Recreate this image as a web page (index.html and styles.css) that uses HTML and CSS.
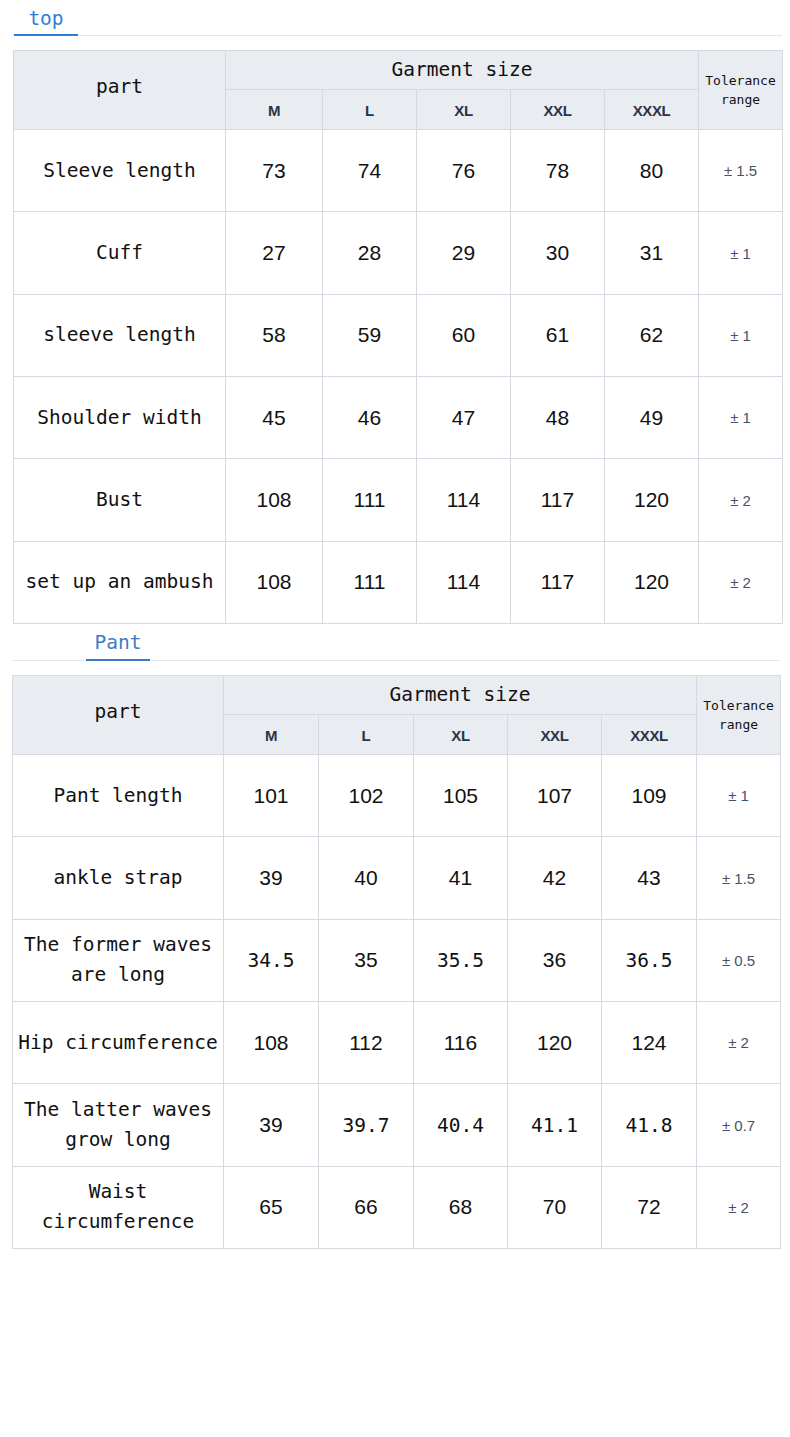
FILE: index.html
```html
<!DOCTYPE html>
<html>
<head>
<meta charset="utf-8">
<link rel="stylesheet" href="styles.css">
</head>
<body>
<section class="sec sec-top">
  <div class="tabbar"><span class="tab">top</span></div>
  <table class="size">
    <colgroup><col class="c-part"><col class="c-m"><col class="c-s"><col class="c-s"><col class="c-s"><col class="c-s"><col class="c-tol"></colgroup>
    <thead>
      <tr class="h1"><th rowspan="2" class="lbl">part</th><th colspan="5" class="lbl">Garment size</th><th rowspan="2" class="tolh">Tolerance<br>range</th></tr>
      <tr class="h2"><th class="sz">M</th><th class="sz">L</th><th class="sz">XL</th><th class="sz">XXL</th><th class="sz">XXXL</th></tr>
    </thead>
    <tbody>
      <tr><td class="name">Sleeve length</td><td class="n">73</td><td class="n">74</td><td class="n">76</td><td class="n">78</td><td class="n">80</td><td class="tol">± 1.5</td></tr>
      <tr><td class="name">Cuff</td><td class="n">27</td><td class="n">28</td><td class="n">29</td><td class="n">30</td><td class="n">31</td><td class="tol">± 1</td></tr>
      <tr><td class="name">sleeve length</td><td class="n">58</td><td class="n">59</td><td class="n">60</td><td class="n">61</td><td class="n">62</td><td class="tol">± 1</td></tr>
      <tr><td class="name">Shoulder width</td><td class="n">45</td><td class="n">46</td><td class="n">47</td><td class="n">48</td><td class="n">49</td><td class="tol">± 1</td></tr>
      <tr><td class="name">Bust</td><td class="n">108</td><td class="n">111</td><td class="n">114</td><td class="n">117</td><td class="n">120</td><td class="tol">± 2</td></tr>
      <tr><td class="name">set up an ambush</td><td class="n">108</td><td class="n">111</td><td class="n">114</td><td class="n">117</td><td class="n">120</td><td class="tol">± 2</td></tr>
    </tbody>
  </table>
</section>
<section class="sec sec-pant">
  <div class="tabbar"><span class="tab">Pant</span></div>
  <table class="size">
    <colgroup><col class="c-part2"><col class="c-s2"><col class="c-s2"><col class="c-s"><col class="c-s"><col class="c-s2"><col class="c-tol"></colgroup>
    <thead>
      <tr class="h1"><th rowspan="2" class="lbl">part</th><th colspan="5" class="lbl">Garment size</th><th rowspan="2" class="tolh">Tolerance<br>range</th></tr>
      <tr class="h2"><th class="sz">M</th><th class="sz">L</th><th class="sz">XL</th><th class="sz">XXL</th><th class="sz">XXXL</th></tr>
    </thead>
    <tbody>
      <tr><td class="name">Pant length</td><td class="n">101</td><td class="n">102</td><td class="n">105</td><td class="n">107</td><td class="n">109</td><td class="tol">± 1</td></tr>
      <tr><td class="name">ankle strap</td><td class="n">39</td><td class="n">40</td><td class="n">41</td><td class="n">42</td><td class="n">43</td><td class="tol">± 1.5</td></tr>
      <tr><td class="name">The former waves are long</td><td class="m">34.5</td><td class="n">35</td><td class="m">35.5</td><td class="n">36</td><td class="m">36.5</td><td class="tol">± 0.5</td></tr>
      <tr><td class="name">Hip circumference</td><td class="n">108</td><td class="n">112</td><td class="n">116</td><td class="n">120</td><td class="n">124</td><td class="tol">± 2</td></tr>
      <tr><td class="name">The latter waves grow long</td><td class="n">39</td><td class="m">39.7</td><td class="m">40.4</td><td class="m">41.1</td><td class="m">41.8</td><td class="tol">± 0.7</td></tr>
      <tr><td class="name">Waist circumference</td><td class="n">65</td><td class="n">66</td><td class="n">68</td><td class="n">70</td><td class="n">72</td><td class="tol">± 2</td></tr>
    </tbody>
  </table>
</section>
</body>
</html>
```

FILE: styles.css
```css
html, body {
  margin: 0;
  padding: 0;
  background: #ffffff;
}
body {
  width: 790px;
  height: 1437px;
  font-family: "DejaVu Sans Mono", "Liberation Mono", monospace;
  color: #111111;
}
.sec-top {
  padding: 0 8px 0 13px;
}
.sec-pant {
  padding: 0 10px 0 12px;
}
.tabbar {
  display: flex;
  border-bottom: 1px solid #e3e6ea;
  margin-bottom: 14px;
}
.tab {
  display: block;
  width: 64px;
  text-align: center;
  font-size: 19.5px;
  line-height: 24px;
  border-bottom: 2px solid #2f7fd6;
  margin-bottom: -1px;
  color: #2f7fd6;
}
.sec-top .tabbar { height: 35px; }
.sec-top .tab { margin-left: 1px; padding-top: 7px; height: 27px; }
.sec-pant .tabbar { height: 36px; }
.sec-pant .tab { margin-left: 74px; padding-top: 7px; height: 28px; color: #3d7cc4; border-bottom-color: #3d7cc4; }

.size {
  border-collapse: collapse;
  table-layout: fixed;
  width: 769px;
}
.sec-pant .size { width: 768px; }
.c-part { width: 212px; }
.c-m { width: 97px; }
.c-s { width: 94px; }
.c-tol { width: 84px; }
.c-part2 { width: 211px; }
.c-s2 { width: 95px; }

.size th, .size td {
  border: 1px solid #d6d9df;
  padding: 0 2px;
  text-align: center;
  vertical-align: middle;
}
.size thead th {
  background: #e9ecf1;
  font-weight: normal;
}
.size .h1 th { height: 38px; }
.size .h2 th { height: 38px; }
.lbl {
  font-size: 19.5px;
  line-height: 24px;
}
.h1 .lbl[rowspan] { padding-bottom: 6px; }
.h1 .lbl[colspan] { padding-top: 0; }
.tolh {
  font-size: 13px;
  line-height: 19px;
  padding-bottom: 2px;
}
.size thead .sz {
  font-family: "Liberation Sans", Arial, sans-serif;
  font-weight: bold;
  font-size: 15px;
  color: #2b3446;
  letter-spacing: -0.4px;
  padding-top: 1px;
}
.size tbody td { height: 81.35px; }
.name {
  font-size: 19.5px;
  line-height: 30px;
  padding-top: 10px;
}
.n {
  font-family: "Liberation Sans", Arial, sans-serif;
  font-size: 21px;
  padding-top: 11px;
}
.m {
  font-size: 19.5px;
  padding-top: 11px;
}
.tol {
  font-family: "Liberation Sans", Arial, sans-serif;
  font-size: 15px;
  color: #4a5262;
  padding-bottom: 2px;
}
```
